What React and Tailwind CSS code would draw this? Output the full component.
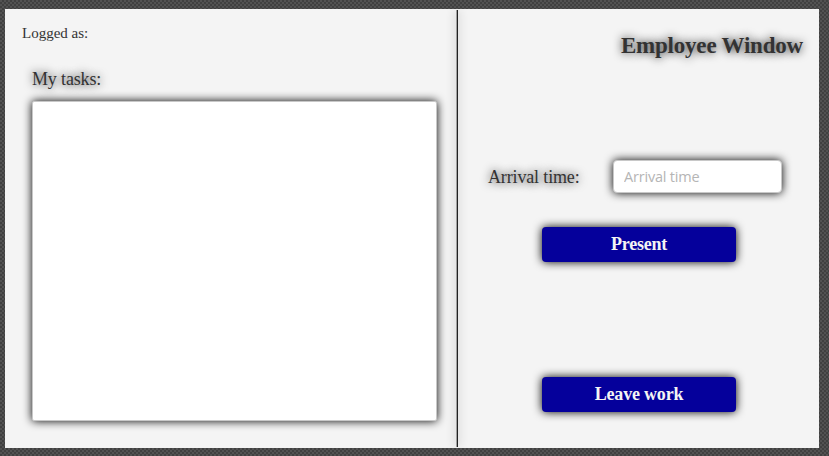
const glow = "shadow-[0_0_10px_#000000]";
const textGlow = "[text-shadow:0_0_10px_#000000e6]";

function ActionButton({ children }) {
  return (
    <button className={`block h-[35px] w-[194px] rounded-[4px] bg-[#05009b] pb-px text-[18px] leading-[34px] font-bold tracking-[-0.2px] text-[#f4f4f4] ${glow}`}>
      {children}
    </button>
  );
}

export default function App() {
  return (
    <div className="h-[456px] w-[829px] overflow-hidden bg-[#494949] bg-[conic-gradient(#404040_25%,#525252_0_50%,#404040_0_75%,#525252_0)] bg-[length:4px_4px] pt-[9px] pl-[5px] font-['Liberation_Serif','Times_New_Roman',serif] text-[#333333]">
      <main className="flex h-[439px] w-[814px] overflow-hidden bg-[#f4f4f4]">
        <section className="w-[451px] pt-[15px] pl-[17px]">
          <p className="text-[15px] leading-[18px]">Logged as:</p>
          <div className="pl-[10px]">
            <h2 className={`mt-[26px] text-[18px] leading-[22px] tracking-[-0.15px] ${textGlow}`}>My tasks:</h2>
            <div className={`mt-[11px] h-[320px] w-[405px] rounded-[2px] border border-[#c8c8c8] bg-white ${glow}`} />
          </div>
        </section>
        <div className="mt-px h-[437px] w-[2px] border-l border-[#a0a0a0] bg-[#222222] shadow-[0_0_10px_#00000050]" />
        <section className="flex-1">
          <h1 className={`mt-[23px] pr-[16px] text-right text-[23px] leading-[28px] font-bold tracking-[-0.2px] ${textGlow}`}>Employee Window</h1>
          <div className="mt-[100px] flex items-center pl-[30px]">
            <label htmlFor="arrival" className={`w-[125px] text-[18px] leading-[22px] tracking-[-0.15px] ${textGlow}`}>Arrival time:</label>
            <input id="arrival" placeholder="Arrival time" className={`h-[33px] w-[169px] rounded-[4px] border border-[#c8c8c8] bg-white pr-[9px] pb-px pl-[10px] font-['Open_Sans',sans-serif] text-[14.5px] tracking-[-0.2px] placeholder:text-[#b5b5b5] ${glow}`} />
          </div>
          <div className="mt-[34px] flex flex-col gap-[115px] pl-[84px]">
            <ActionButton>Present</ActionButton>
            <ActionButton>Leave work</ActionButton>
          </div>
        </section>
      </main>
    </div>
  );
}
